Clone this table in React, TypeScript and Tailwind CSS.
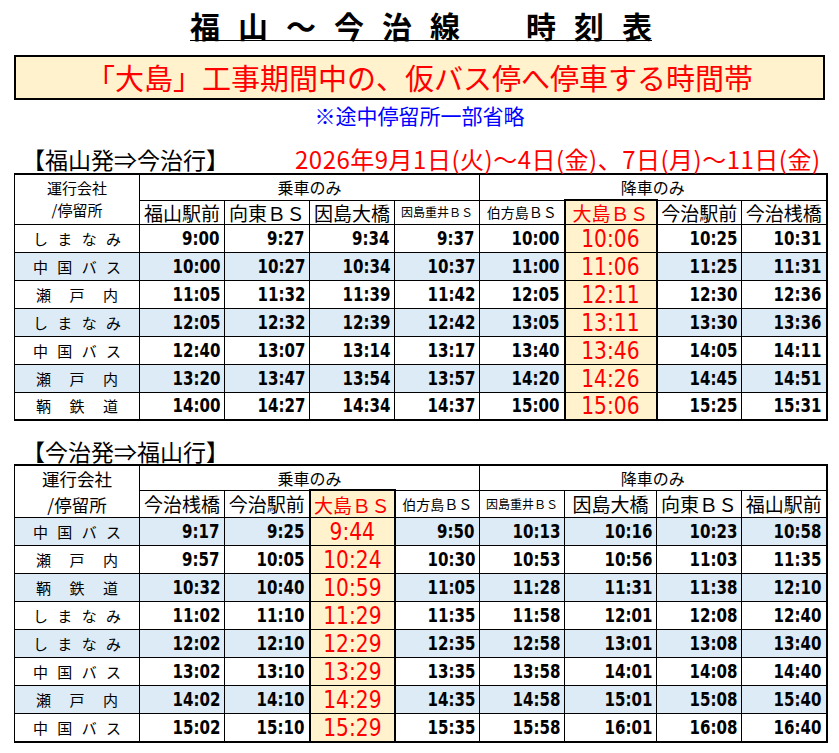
import React from "react";

// column widths shared by both timetables
const colWidths = [
  "w-[125px]",
  "w-[85px]",
  "w-[85px]",
  "w-[85px]",
  "w-[85px]",
  "w-[85px]",
  "w-[92px]",
  "w-[85px]",
  "w-[85px]",
];

interface Stop {
  name: string;
  size: string;
  highlight?: boolean;
}

interface Row {
  op: string;
  times: string[];
  blue: boolean;
}

const outboundStops: Stop[] = [
  { name: "福山駅前", size: "text-[19px]" },
  { name: "向東ＢＳ", size: "text-[19px]" },
  { name: "因島大橋", size: "text-[19px]" },
  { name: "因島重井ＢＳ", size: "text-[12px]" },
  { name: "伯方島ＢＳ", size: "text-[14px]" },
  { name: "大島ＢＳ", size: "text-[19px]", highlight: true },
  { name: "今治駅前", size: "text-[19px]" },
  { name: "今治桟橋", size: "text-[19px]" },
];

const inboundStops: Stop[] = [
  { name: "今治桟橋", size: "text-[19px]" },
  { name: "今治駅前", size: "text-[19px]" },
  { name: "大島ＢＳ", size: "text-[19px]", highlight: true },
  { name: "伯方島ＢＳ", size: "text-[14px]" },
  { name: "因島重井ＢＳ", size: "text-[12px]" },
  { name: "因島大橋", size: "text-[19px]" },
  { name: "向東ＢＳ", size: "text-[19px]" },
  { name: "福山駅前", size: "text-[19px]" },
];

const outboundRows: Row[] = [
  { op: "しまなみ", blue: false, times: ["9:00", "9:27", "9:34", "9:37", "10:00", "10:06", "10:25", "10:31"] },
  { op: "中国バス", blue: true, times: ["10:00", "10:27", "10:34", "10:37", "11:00", "11:06", "11:25", "11:31"] },
  { op: "瀬戸内", blue: false, times: ["11:05", "11:32", "11:39", "11:42", "12:05", "12:11", "12:30", "12:36"] },
  { op: "しまなみ", blue: true, times: ["12:05", "12:32", "12:39", "12:42", "13:05", "13:11", "13:30", "13:36"] },
  { op: "中国バス", blue: false, times: ["12:40", "13:07", "13:14", "13:17", "13:40", "13:46", "14:05", "14:11"] },
  { op: "瀬戸内", blue: true, times: ["13:20", "13:47", "13:54", "13:57", "14:20", "14:26", "14:45", "14:51"] },
  { op: "鞆鉄道", blue: false, times: ["14:00", "14:27", "14:34", "14:37", "15:00", "15:06", "15:25", "15:31"] },
];

const inboundRows: Row[] = [
  { op: "中国バス", blue: true, times: ["9:17", "9:25", "9:44", "9:50", "10:13", "10:16", "10:23", "10:58"] },
  { op: "瀬戸内", blue: false, times: ["9:57", "10:05", "10:24", "10:30", "10:53", "10:56", "11:03", "11:35"] },
  { op: "鞆鉄道", blue: true, times: ["10:32", "10:40", "10:59", "11:05", "11:28", "11:31", "11:38", "12:10"] },
  { op: "しまなみ", blue: false, times: ["11:02", "11:10", "11:29", "11:35", "11:58", "12:01", "12:08", "12:40"] },
  { op: "しまなみ", blue: true, times: ["12:02", "12:10", "12:29", "12:35", "12:58", "13:01", "13:08", "13:40"] },
  { op: "中国バス", blue: false, times: ["13:02", "13:10", "13:29", "13:35", "13:58", "14:01", "14:08", "14:40"] },
  { op: "瀬戸内", blue: true, times: ["14:02", "14:10", "14:29", "14:35", "14:58", "15:01", "15:08", "15:40"] },
  { op: "中国バス", blue: false, times: ["15:02", "15:10", "15:29", "15:35", "15:58", "16:01", "16:08", "16:40"] },
];

const timeFont = "font-['DejaVu_Sans_Condensed','DejaVu_Sans',sans-serif] font-stretch-condensed";

function Operator({ name }: { name: string }) {
  const chars = name.split("");
  return (
    <div className={`flex justify-between text-[15px] leading-none ${chars.length === 4 ? "px-[18px]" : "px-[21px]"}`}>
      {chars.map((c, i) => (
        <span key={i}>{c}</span>
      ))}
    </div>
  );
}

function Timetable({
  stops,
  rows,
  headSize,
  head1,
  head2,
}: {
  stops: Stop[];
  rows: Row[];
  headSize: string;
  head1: string;
  head2: string;
}) {
  const last = rows.length - 1;
  return (
    <table className="ml-[14px] w-[812px] table-fixed border-collapse border-t-2 border-r-2 border-b-2 border-l border-black">
      <colgroup>
        {colWidths.map((w, i) => (
          <col key={i} className={w} />
        ))}
      </colgroup>
      <thead>
        <tr className={head1}>
          <th rowSpan={2} className={`border border-black p-0 font-normal ${headSize}`}>
            <div className="flex flex-col items-center">
              <span>運行会社</span>
              <span>/停留所</span>
            </div>
          </th>
          <th colSpan={4} className="border border-black p-0 text-[16px] font-normal leading-none">
            乗車のみ
          </th>
          <th colSpan={4} className="border border-black border-r-2 p-0 text-[16px] font-normal leading-none">
            降車のみ
          </th>
        </tr>
        <tr className={head2}>
          {stops.map((s) =>
            s.highlight ? (
              <th
                key={s.name}
                className={`border border-x-2 border-t-2 border-black bg-[#FFF2CC] p-0 font-normal leading-none whitespace-nowrap text-[#FF0000] ${s.size}`}
              >
                {s.name}
              </th>
            ) : (
              <th key={s.name} className={`border border-black p-0 font-normal leading-none whitespace-nowrap ${s.size}`}>
                {s.name}
              </th>
            )
          )}
        </tr>
      </thead>
      <tbody>
        {rows.map((r, ri) => (
          <tr key={ri} className={`h-[28px] ${r.blue ? "bg-[#DDEBF7]" : "bg-white"}`}>
            <td className="border border-black p-0">
              <Operator name={r.op} />
            </td>
            {r.times.map((t, ti) =>
              stops[ti].highlight ? (
                <td
                  key={ti}
                  className={`border border-x-2 border-black bg-[#FFF2CC] p-0 text-center leading-none text-[#FF0000] ${
                    ri === last ? "border-b-2" : ""
                  }`}
                >
                  <span className={`inline-block scale-x-[0.9] text-[25px] leading-none ${timeFont}`}>{t}</span>
                </td>
              ) : (
                <td key={ti} className="border border-black p-0 pr-[4px] text-right leading-none">
                  <span className={`inline-block origin-right scale-x-[0.88] text-[19px] font-bold leading-none ${timeFont}`}>
                    {t}
                  </span>
                </td>
              )
            )}
          </tr>
        ))}
      </tbody>
    </table>
  );
}

export default function App() {
  const titleChars = ["福", "山", "～", "今", "治", "線", "　", "時", "刻", "表"];
  return (
    <div className="relative h-[753px] w-[839px] overflow-hidden bg-white font-['Noto_Sans_CJK_JP',sans-serif] text-black">
      {/* title */}
      <div className="flex justify-center pt-[10px]">
        <div className="ml-[3px] flex gap-[18px] border-b border-black text-[30px] font-bold leading-[30px]">
          {titleChars.map((c, i) => (
            <span key={i}>{c}</span>
          ))}
        </div>
      </div>

      {/* notice banner */}
      <div className="mx-[14px] mt-[14px] flex h-[45px] items-center justify-center border-2 border-black bg-[#FFF2CC] text-[29px] leading-none text-[#FF0000]">
        「大島」工事期間中の、仮バス停へ停車する時間帯
      </div>
      <div className="mt-[3px] text-center text-[21px] leading-[24px] text-[#0000FF]">※途中停留所一部省略</div>

      {/* outbound */}
      <div className="flex h-[46px] items-end pb-[1px]">
        <span className="ml-[22px] text-[23px] leading-[26px]">【福山発⇒今治行】</span>
        <span className="ml-[66px] text-[24px] leading-[26px] tracking-[0.5px] text-[#FF0000]">
          2026年9月1日(火)～4日(金)、7日(月)～11日(金)
        </span>
      </div>
      <Timetable
        stops={outboundStops}
        rows={outboundRows}
        headSize="text-[15px] leading-[22px]"
        head1="h-[26px]"
        head2="h-[24px]"
      />

      {/* inbound */}
      <div className="flex h-[43px] items-end">
        <span className="ml-[22px] text-[23px] leading-[26px]">【今治発⇒福山行】</span>
      </div>
      <Timetable
        stops={inboundStops}
        rows={inboundRows}
        headSize="text-[17.5px] leading-[25.5px]"
        head1="h-[24px]"
        head2="h-[26px]"
      />
    </div>
  );
}
